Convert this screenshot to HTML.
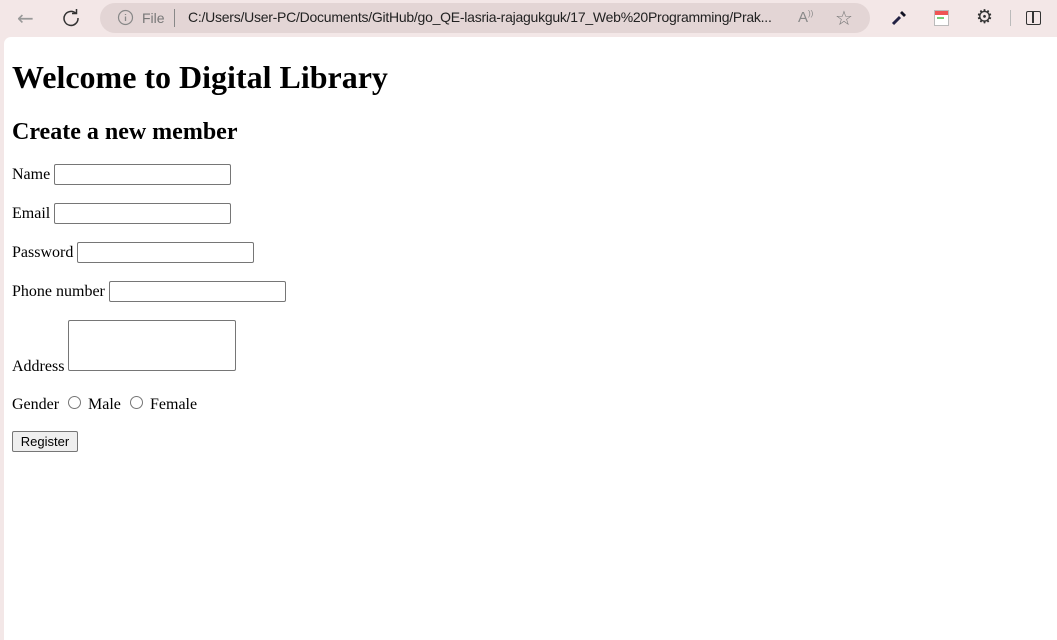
<!DOCTYPE html>
<html><head><meta charset="utf-8"><style>
*{margin:0;padding:0;box-sizing:border-box}
body{width:1057px;height:640px;background:#f3e7e7;position:relative;overflow:hidden;font-family:"Liberation Serif",serif;color:#000}
.page{position:absolute;left:4px;top:37px;width:1053px;height:603px;background:#fff;border-top-left-radius:7px}
.a{position:absolute;white-space:nowrap}
.t{font-size:16px;line-height:18px}
.in{position:absolute;height:21px;border:1px solid #767676;border-radius:2px;background:#fff}
.rad{position:absolute;width:13px;height:13px;border:1px solid #767676;border-radius:50%;background:#fff}
.ui{font-family:"Liberation Sans",sans-serif;color:#333}
</style></head><body>
<div class="a" style="left:17px;top:6px;font-size:20px;color:#999;font-family:'DejaVu Sans'">←</div>
<svg class="a" style="left:61px;top:8px" width="20" height="20" viewBox="0 0 20 20"><path d="M15 5.5A7 7 0 1 0 17 10" fill="none" stroke="#333" stroke-width="1.5"/><path d="M11 5.5h4.5V1" fill="none" stroke="#333" stroke-width="1.5"/></svg>
<div class="a" style="left:100px;top:3px;width:770px;height:30px;background:#e3d5d5;border-radius:15px"></div>
<svg class="a" style="left:117px;top:9px" width="17" height="17" viewBox="0 0 17 17"><circle cx="8.5" cy="8.5" r="7" fill="none" stroke="#888" stroke-width="1.2"/><path d="M8.5 7.5v4.5M8.5 5v1" stroke="#888" stroke-width="1.3"/></svg>
<div class="a ui" style="left:142px;top:10px;font-size:14px;color:#777">File</div>
<div class="a" style="left:174px;top:9px;width:1px;height:18px;background:#888"></div>
<div class="a ui" style="left:188px;top:9px;font-size:14px;color:#222;width:600px;overflow:hidden;letter-spacing:-0.25px">C:/Users/User-PC/Documents/GitHub/go_QE-lasria-rajagukguk/17_Web%20Programming/Prak...</div>
<div class="a ui" style="left:798px;top:9px;font-size:15px;color:#888">A<sup style="font-size:8px">))</sup></div>
<div class="a" style="left:835px;top:6px;font-size:20px;color:#777;font-family:'DejaVu Sans'">☆</div>
<svg class="a" style="left:890px;top:9px" width="18" height="18" viewBox="0 0 18 18"><path d="M3 15L10 8" stroke="#224" stroke-width="3"/><path d="M10 4l4 4 2-2-4-4z" fill="#112"/></svg>
<div class="a" style="left:934px;top:10px;width:15px;height:16px;border:1px solid #bbb;background:#fff"><div style="height:4px;background:#e55"></div><div style="margin:2px 2px;height:2px;width:7px;background:#7c7"></div></div>
<div class="a" style="left:976px;top:6px;font-size:19px;color:#333;font-family:'DejaVu Sans'">⚙</div>
<div class="a" style="left:1010px;top:10px;width:1px;height:16px;background:#bbb"></div>
<div class="a" style="left:1026px;top:11px;width:15px;height:14px;border:1.5px solid #333;border-radius:2px"><div style="margin-left:5px;width:1.5px;height:11px;background:#333"></div></div>
<div class="page"></div>
<div class="a" style="left:12px;top:59px;font-size:32px;font-weight:bold;line-height:37px">Welcome to Digital Library</div>
<div class="a" style="left:12px;top:118px;font-size:24px;font-weight:bold;line-height:28px">Create a new member</div>
<div class="a t" style="left:12px;top:166px">Name</div><div class="in" style="left:54px;top:164px;width:177px"></div>
<div class="a t" style="left:12px;top:205px">Email</div><div class="in" style="left:54px;top:203px;width:177px"></div>
<div class="a t" style="left:12px;top:244px">Password</div><div class="in" style="left:77px;top:242px;width:177px"></div>
<div class="a t" style="left:12px;top:283px">Phone number</div><div class="in" style="left:109px;top:281px;width:177px"></div>
<div class="a t" style="left:12px;top:358px">Address</div><div class="in" style="left:68px;top:320px;width:168px;height:51px"></div>
<div class="a t" style="left:12px;top:396px">Gender</div><div class="rad" style="left:68px;top:396px"></div>
<div class="a t" style="left:88px;top:396px">Male</div><div class="rad" style="left:130px;top:396px"></div>
<div class="a t" style="left:150px;top:396px">Female</div>
<div class="a" style="left:12px;top:431px;width:66px;height:21px;border:1px solid #767676;border-radius:2px;background:#efefef;font-family:'Liberation Sans',sans-serif;font-size:13px;text-align:center;line-height:19px">Register</div>
</body></html>
